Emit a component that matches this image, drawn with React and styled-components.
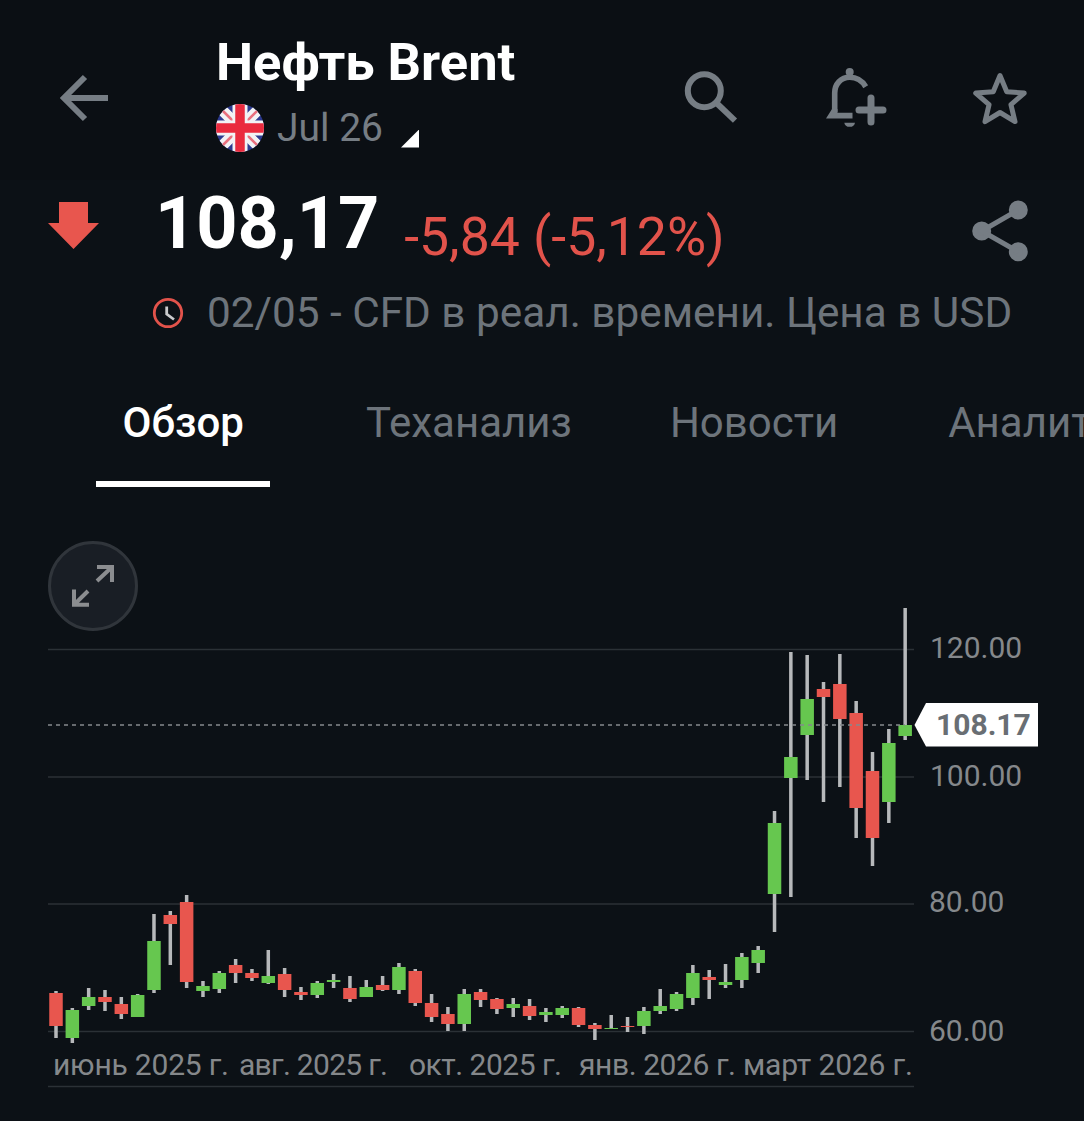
import React from 'react'
import styled, { createGlobalStyle } from 'styled-components'

const GlobalStyle = createGlobalStyle`
  html, body {
    margin: 0;
    padding: 0;
    background: #0c1116;
  }
  * {
    box-sizing: border-box;
  }
`

const Page = styled.div`
  width: 1084px;
  height: 1121px;
  overflow: hidden;
  background: #0c1116;
  font-family: Roboto, "Noto Sans", sans-serif;
`

const Header = styled.header`
  height: 180px;
  background: #0b0f14;
  display: flex;
  align-items: flex-start;
  padding: 0 56px 0 60px;
`

const BackIcon = styled.svg`
  width: 48px;
  height: 48px;
  margin-top: 74px;
  flex: none;
  fill: none;
  stroke: #767d84;
  stroke-width: 6;
`

const TitleBlock = styled.div`
  margin-left: 108px;
  padding-top: 34px;
`

const Title = styled.h1`
  margin: 0;
  font-size: 52.5px;
  line-height: 56px;
  font-weight: 700;
  color: #fff;
  white-space: nowrap;
`

const Contract = styled.div`
  display: flex;
  align-items: center;
  margin-top: 14px;
  height: 48px;
`

const Month = styled.span`
  margin-left: 13px;
  font-size: 39px;
  line-height: 48px;
  color: #767d84;
`

const Caret = styled.span`
  width: 18px;
  height: 18px;
  margin: 21px 0 0 18px;
  background: #fff;
  clip-path: polygon(100% 0, 100% 100%, 0 100%);
`

const Actions = styled.div`
  margin-left: auto;
  margin-top: 66px;
  display: flex;
  gap: 85px;
`

const ActionIcon = styled.svg`
  height: 62px;
  width: ${p => p.$w}px;
  flex: none;
  fill: none;
  stroke: #767d84;
  stroke-width: 6;
  stroke-linecap: ${p => (p.$round ? 'round' : 'butt')};
  stroke-linejoin: round;
`

const PriceRow = styled.div`
  height: 92px;
  display: flex;
  align-items: flex-start;
  padding: 0 56px 0 48px;
`

const DownArrow = styled.svg`
  width: 52px;
  height: 50px;
  margin-top: 21px;
  flex: none;
  fill: #e8564e;
`

const Price = styled.div`
  margin-left: 55px;
  padding-top: 2px;
  font-size: 72px;
  line-height: 84px;
  font-weight: 700;
  color: #fff;
`

const Change = styled.div`
  margin-left: 25px;
  margin-top: 27px;
  font-size: 53.5px;
  line-height: 60px;
  color: #e2534b;
  white-space: nowrap;
`

const ShareIcon = styled.svg`
  width: 56px;
  height: 62px;
  margin-left: auto;
  margin-top: 20px;
  flex: none;
  fill: #767d84;
  stroke: #767d84;
  stroke-width: 5;
`

const TimeRow = styled.div`
  height: 48px;
  display: flex;
  align-items: center;
  padding-left: 152px;
  margin-top: 17px;
`

const ClockIcon = styled.svg`
  width: 32px;
  height: 32px;
  flex: none;
  fill: none;
  stroke-width: 2.8;
`

const ClockRing = styled.circle`
  stroke: #e2534b;
`

const ClockHands = styled.path`
  stroke: #c9cbcd;
`

const TimeText = styled.span`
  margin-left: 23px;
  font-size: 42.3px;
  line-height: 48px;
  color: #6d747b;
  white-space: nowrap;
`

const Tabs = styled.nav`
  height: 125px;
  margin-top: 25px;
  display: flex;
  align-items: flex-start;
  padding-left: 96px;
  white-space: nowrap;
`

const Tab = styled.div`
  height: 125px;
  padding: 38px 26.5px 0;
  margin-left: ${p => p.$gap || 0}px;
  font-size: 42px;
  line-height: 46px;
  font-weight: ${p => (p.$active ? 500 : 400)};
  color: ${p => (p.$active ? '#fff' : '#6d747b')};
  border-bottom: 6px solid ${p => (p.$active ? '#fff' : 'transparent')};
`

const ChartArea = styled.section`
  position: relative;
  height: 634px;
`

const ChartSvg = styled.svg`
  display: block;
  width: 1084px;
  height: 634px;
  font-family: Roboto, sans-serif;
`

const ExpandButton = styled.button`
  position: absolute;
  left: 48px;
  top: 54px;
  width: 90px;
  height: 90px;
  padding: 0;
  border-radius: 50%;
  border: 3px solid #30353b;
  background: #191e25;
  display: flex;
  align-items: center;
  justify-content: center;
`

const ExpandIcon = styled.svg`
  width: 84px;
  height: 84px;
  fill: none;
  stroke: #8b8d90;
  stroke-width: 4;
`

const GridLine = styled.line`
  stroke: #2b3136;
  stroke-width: 1.5;
`

const PriceLine = styled.line`
  stroke: #85898d;
  stroke-width: 1.5;
  stroke-dasharray: 4 4;
`

const Wick = styled.rect`
  fill: #b7b9bb;
`

const Body = styled.rect`
  fill: ${p => (p.$up ? '#66c74f' : '#e8564e')};
`

const AxisLabel = styled.text`
  font-size: 30px;
  fill: #85888b;
`

const TagText = styled.text`
  font-size: 30px;
  font-weight: 700;
  fill: #696e73;
`

// [bodyTop, bodyBottom, wickTop, wickBottom, up]
const candles = [
  [993, 1026, 991, 1038, 0],
  [1010, 1038, 1008, 1043, 1],
  [997, 1006, 988, 1010, 1],
  [997, 1002, 990, 1011, 0],
  [1004, 1014, 997, 1019, 0],
  [995, 1017, 994, 1017, 1],
  [941, 990, 914, 993, 1],
  [915, 924, 911, 965, 0],
  [902, 982, 895, 988, 0],
  [986, 991, 981, 997, 1],
  [973, 989, 971, 993, 1],
  [965, 973, 959, 983, 0],
  [973, 978, 969, 981, 0],
  [976, 983, 950, 984, 1],
  [974, 990, 968, 997, 0],
  [992, 995, 987, 1000, 0],
  [983, 995, 981, 998, 1],
  [980, 982, 974, 988, 1],
  [988, 999, 976, 1002, 0],
  [987, 997, 980, 997, 1],
  [985, 990, 976, 991, 0],
  [967, 990, 963, 994, 1],
  [971, 1003, 969, 1006, 0],
  [1003, 1017, 994, 1022, 0],
  [1014, 1024, 1007, 1031, 0],
  [994, 1024, 989, 1031, 1],
  [992, 1000, 989, 1007, 0],
  [999, 1009, 998, 1014, 0],
  [1004, 1008, 998, 1017, 1],
  [1006, 1016, 999, 1020, 0],
  [1012, 1015, 1008, 1022, 1],
  [1008, 1015, 1006, 1018, 1],
  [1008, 1025, 1007, 1027, 0],
  [1025, 1029, 1023, 1040, 0],
  [1028, 1029, 1015, 1029, 1],
  [1026, 1027, 1017, 1032, 0],
  [1011, 1026, 1007, 1034, 1],
  [1006, 1011, 989, 1014, 1],
  [994, 1009, 992, 1011, 1],
  [973, 998, 965, 1005, 1],
  [977, 980, 970, 999, 0],
  [982, 985, 964, 988, 1],
  [957, 980, 953, 988, 1],
  [950, 963, 946, 973, 1],
  [823, 894, 811, 932, 1],
  [757, 778, 652, 897, 1],
  [699, 735, 655, 780, 1],
  [689, 697, 682, 802, 0],
  [684, 719, 654, 787, 0],
  [713, 808, 701, 838, 0],
  [771, 838, 752, 866, 0],
  [743, 802, 729, 823, 1],
  [725, 736, 608, 740, 1],
]

const gridRows = [649.5, 777, 904, 1031.5, 1086.5]

const priceLabels = [
  { text: '120.00', x: 930, y: 658 },
  { text: '100.00', x: 930, y: 786 },
  { text: '80.00', x: 929, y: 912 },
  { text: '60.00', x: 929, y: 1041 },
]

const dateLabels = [
  { text: 'июнь 2025 г.', x: 53, w: 176 },
  { text: 'авг. 2025 г.', x: 239, w: 149 },
  { text: 'окт. 2025 г.', x: 409, w: 153 },
  { text: 'янв. 2026 г.', x: 579, w: 157 },
  { text: 'март 2026 г.', x: 743, w: 170 },
]

const UkFlag = () => (
  <svg width="48" height="48" viewBox="0 0 48 48">
    <defs>
      <clipPath id="flag-circle">
        <circle cx="24" cy="24" r="24" />
      </clipPath>
    </defs>
    <g clipPath="url(#flag-circle)">
      <rect width="48" height="48" fill="#2c3a8f" />
      <path d="M0 0L48 48M48 0L0 48" stroke="#f2f2f5" strokeWidth="11" />
      <path d="M4 4L20 20M44 4L28 20M4 44L20 28M44 44L28 28" stroke="#e8707e" strokeWidth="2.5" />
      <path d="M24 0V48M0 24H48" stroke="#f2f2f5" strokeWidth="15" />
      <path d="M24 0V48M0 24H48" stroke="#ea2a3e" strokeWidth="9.5" />
    </g>
  </svg>
)

const Chart = () => (
  <ChartSvg viewBox="0 487 1084 634">
    {gridRows.map(y => (
      <GridLine key={y} x1="48" x2="914" y1={y} y2={y} />
    ))}
    {candles.map(([top, bottom, wickTop, wickBottom, up], i) => {
      const x = 56 + i * 16.33
      return (
        <g key={i}>
          <Wick x={x - 1.75} y={wickTop} width="3.5" height={wickBottom - wickTop} />
          <Body $up={up} x={x - 6.75} y={top} width="13.5" height={bottom - top} />
        </g>
      )
    })}
    <PriceLine x1="48" x2="905" y1="725" y2="725" />
    <polygon points="914.5,725 926,703 1038,703 1038,746.5 926,746.5" fill="#fff" />
    <TagText x="936" y="735">108.17</TagText>
    {priceLabels.map(l => (
      <AxisLabel key={l.text} x={l.x} y={l.y}>{l.text}</AxisLabel>
    ))}
    {dateLabels.map(l => (
      <AxisLabel key={l.text} x={l.x} y="1075" textLength={l.w}>{l.text}</AxisLabel>
    ))}
  </ChartSvg>
)

export default function App() {
  return (
    <Page>
      <GlobalStyle />
      <Header>
        <BackIcon viewBox="0 0 48 48">
          <path d="M48 24H4M25 3L4 24L25 45" />
        </BackIcon>
        <TitleBlock>
          <Title>Нефть Brent</Title>
          <Contract>
            <UkFlag />
            <Month>Jul 26</Month>
            <Caret />
          </Contract>
        </TitleBlock>
        <Actions>
          <ActionIcon $w={56} viewBox="0 0 56 62">
            <circle cx="20.3" cy="24.7" r="16.5" />
            <path d="M32.5 37L51 54.7" />
          </ActionIcon>
          <ActionIcon $w={62} viewBox="0 0 62 62">
            <circle cx="24.7" cy="6" r="4" fill="#767d84" stroke="none" />
            <path d="M40.7 20.7C37 14.5 31.5 11.3 24.7 11.3C16 11.3 9.7 18 9.7 27V46" strokeWidth="5.6" />
            <path d="M7 43L1 52.5H27.5V46.7H12.5V43Z" fill="#767d84" stroke="none" />
            <path d="M19.3 56.7H30A5.4 4.8 0 0 1 19.3 56.7Z" fill="#767d84" stroke="none" />
            <path d="M46 32V56M34 44H58" strokeWidth="7" strokeLinecap="round" />
          </ActionIcon>
          <ActionIcon $w={56} viewBox="0 0 56 62">
            <polygon
              strokeWidth="5"
              points="28,9.5 34.76,25.7 52.25,27.1 38.94,38.55 43,55.6 28,46.5 13,55.6 17.06,38.55 3.75,27.1 21.24,25.7"
            />
          </ActionIcon>
        </Actions>
      </Header>

      <PriceRow>
        <DownArrow viewBox="0 0 52 50">
          <path d="M11 1H40V22H51L25.5 48L0 22H11Z" />
        </DownArrow>
        <Price>108,17</Price>
        <Change>-5,84 (-5,12%)</Change>
        <ShareIcon viewBox="0 0 56 62">
          <circle cx="46.3" cy="10" r="7" />
          <circle cx="9.7" cy="31" r="7" />
          <circle cx="46.3" cy="51.7" r="7" />
          <path d="M46.3 10L9.7 31L46.3 51.7" fill="none" />
        </ShareIcon>
      </PriceRow>

      <TimeRow>
        <ClockIcon viewBox="0 0 32 32">
          <ClockRing cx="16" cy="16" r="13.7" />
          <ClockHands d="M14.7 9.5V17L22 22.5" />
        </ClockIcon>
        <TimeText>02/05 - CFD в реал. времени. Цена в USD</TimeText>
      </TimeRow>

      <Tabs>
        <Tab $active>Обзор</Tab>
        <Tab $gap={69}>Теханализ</Tab>
        <Tab $gap={45}>Новости</Tab>
        <Tab $gap={57}>Аналитика</Tab>
      </Tabs>

      <ChartArea>
        <Chart />
        <ExpandButton aria-label="Развернуть">
          <ExpandIcon viewBox="3 3 84 84">
            <path d="M49 40L64 26M49 26H64V41" />
            <path d="M40 50L26 63.7M26 48.5V63.7H41" />
          </ExpandIcon>
        </ExpandButton>
      </ChartArea>
    </Page>
  )
}
